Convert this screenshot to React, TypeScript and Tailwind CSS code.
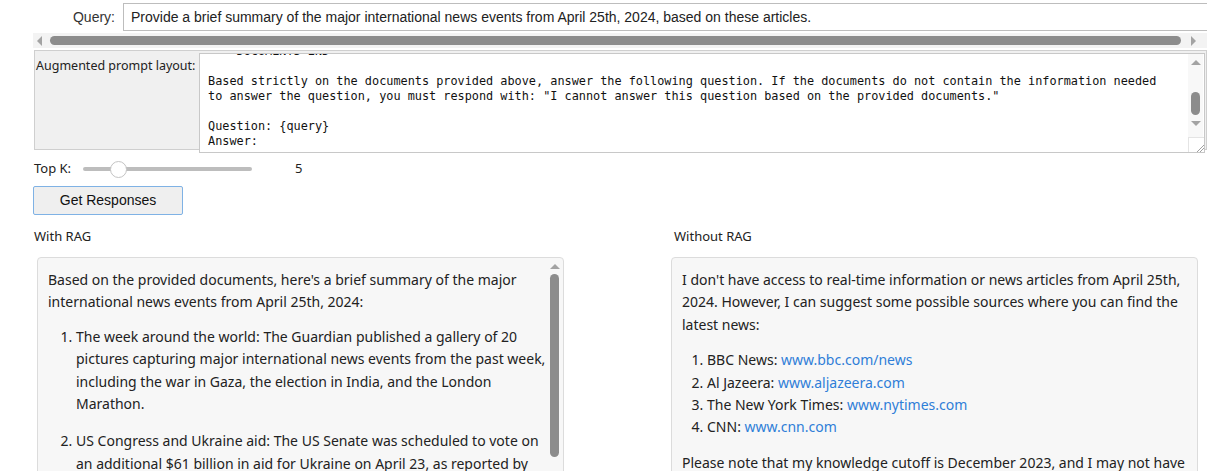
import React from 'react';

const ui = "font-['Noto_Sans',sans-serif]";
const arial = "font-['Liberation_Sans',Arial,sans-serif]";
const mono = "font-['DejaVu_Sans_Mono',monospace]";

function Arrow({ dir, className }: { dir: 'up' | 'down' | 'left' | 'right'; className?: string }) {
  const pts = {
    up: '0,6 5,1 10,6',
    down: '0,1 5,6 10,1',
    left: '6,0 1,5 6,10',
    right: '1,0 6,5 1,10',
  }[dir];
  const vb = dir === 'up' || dir === 'down' ? '0 0 10 7' : '0 0 7 10';
  const size = dir === 'up' || dir === 'down' ? 'w-[10px] h-[7px]' : 'w-[7px] h-[10px]';
  return (
    <svg viewBox={vb} className={`${size} ${className ?? ''}`}>
      <polygon points={pts} fill="#a3a3a3" />
    </svg>
  );
}

const prompt = `--- DOCUMENTS END ---

Based strictly on the documents provided above, answer the following question. If the documents do not contain the information needed
to answer the question, you must respond with: "I cannot answer this question based on the provided documents."

Question: {query}
Answer:`;

function Link({ children }: { children: React.ReactNode }) {
  return <span className="text-[#2f7ed8]">{children}</span>;
}

export default function App() {
  return (
    <div className={`h-[471px] w-[1207px] overflow-hidden bg-white text-[#222] ${ui}`}>
      {/* Query row */}
      <div className="flex items-center pt-[3px] pl-[33px]">
        <div className={`w-[82px] shrink-0 text-right text-[14px] text-[#333] ${arial}`}>Query:</div>
        <div
          className={`ml-[8px] h-[28px] w-[1120px] shrink-0 border border-[#bdbdbd] bg-white pl-[7px] text-[14px] leading-[26px] text-[#222] ${arial}`}
        >
          Provide a brief summary of the major international news events from April 25th, 2024, based on these articles.
        </div>
      </div>

      {/* horizontal scrollbar of the output area */}
      <div className="ml-[33px] mt-[2px] flex h-[15px] items-center bg-[#f3f3f3]">
        <Arrow dir="left" className="ml-[3px]" />
        <div className="ml-[7px] h-[9px] w-[1131px] rounded-full bg-[#8c8c8c]" />
        <Arrow dir="right" className="ml-[9px]" />
      </div>

      {/* Augmented prompt layout */}
      <div className="ml-[34px] mt-[2px] flex h-[100px] items-start border border-[#cfcfcf] bg-[#f0f0f0]">
        <div className="w-[164px] shrink-0 whitespace-nowrap pl-px pt-[4px] text-[12.5px] leading-[22px] text-[#222]">
          Augmented prompt layout:
        </div>
        <div className="relative mt-[2px] h-[100px] w-[1006px] shrink-0 overflow-hidden border border-[#c8c8c8] bg-white">
          <pre className={`-mt-[10.5px] pl-[8px] text-[11.85px] leading-[15px] text-[#111] ${mono}`}>{prompt}</pre>
          <div className="absolute right-[1px] top-0 flex h-[83px] w-[15px] flex-col items-center bg-[#f8f8f8]">
            <Arrow dir="up" className="mt-[5px]" />
            <div className="mt-[26px] h-[23px] w-[9px] rounded-full bg-[#8c8c8c]" />
            <Arrow dir="down" className="mt-[5px]" />
          </div>
          <div className="absolute bottom-0 right-0 flex h-[15px] w-[16px] items-end justify-end border-l border-t border-[#e4e4e4] bg-white">
            <svg viewBox="0 0 10 10" className="h-[10px] w-[10px]">
              <line x1="3" y1="10" x2="10" y2="3" stroke="#a0a0a0" strokeWidth="1" />
              <line x1="6" y1="10" x2="10" y2="6" stroke="#a0a0a0" strokeWidth="1" />
            </svg>
          </div>
        </div>
      </div>

      {/* Top K slider */}
      <div className="ml-[34px] mt-[7px] flex h-[24px] items-center text-[13px]">
        <div className="w-[49px]">Top K:</div>
        <div className="relative flex h-[24px] w-[169px] items-center">
          <div className="h-[4px] w-full rounded-full bg-[#bdbdbd]" />
          <div className="absolute left-[27px] top-[4px] h-[17px] w-[17px] rounded-full border border-[#c4c4c4] bg-white" />
        </div>
        <div className="ml-[43px] text-[13px]">5</div>
      </div>

      {/* Button */}
      <button
        className={`ml-[33px] mt-[5px] h-[29px] w-[150px] rounded-[2px] border border-[#7fb2e5] bg-[#efefef] text-[14px] text-[#111] ${arial}`}
      >
        Get Responses
      </button>

      {/* Results */}
      <div className="mt-[11px] flex text-[14px] leading-[22.4px]">
        {/* With RAG */}
        <div className="w-[670px] shrink-0 pl-[34px]">
          <div className="h-[20px] text-[13px] leading-[20px]">With RAG</div>
          <div className="relative ml-[3px] mt-[11px] h-[260px] w-[527px] overflow-hidden rounded-[4px] border border-[#dcdcdc] bg-[#f7f7f7] px-[10px] pt-[11px]">
            <p>
              Based on the provided documents, here's a brief summary of the major
              <br />
              international news events from April 25th, 2024:
            </p>
            <ol className="mt-[12px] list-decimal pl-[28px]">
              <li>
                The week around the world: The Guardian published a gallery of 20
                <br />
                pictures capturing major international news events from the past week,
                <br />
                including the war in Gaza, the election in India, and the London
                <br />
                Marathon.
              </li>
              <li className="mt-[15px]">
                US Congress and Ukraine aid: The US Senate was scheduled to vote on
                <br />
                an additional $61 billion in aid for Ukraine on April 23, as reported by
                <br />
                The Guardian.
              </li>
            </ol>
            <div className="absolute right-[3px] top-0 flex h-full w-[11px] flex-col items-center">
              <Arrow dir="up" className="mt-[5px] h-[6px] w-[9px]" />
              <div className="mt-[4px] h-[183px] w-[9px] rounded-full bg-[#8c8c8c]" />
            </div>
          </div>
        </div>

        {/* Without RAG */}
        <div className="w-[537px] shrink-0">
          <div className="h-[20px] pl-[4px] text-[13px] leading-[20px]">Without RAG</div>
          <div className="ml-px mt-[11px] h-[260px] w-[527px] overflow-hidden rounded-[4px] border border-[#dcdcdc] bg-[#f7f7f7] px-[10px] pt-[11px]">
            <p>
              I don't have access to real-time information or news articles from April 25th,
              <br />
              2024. However, I can suggest some possible sources where you can find the
              <br />
              latest news:
            </p>
            <ol className="mt-[13px] list-decimal pl-[25px]">
              <li>
                BBC News: <Link>www.bbc.com/news</Link>
              </li>
              <li>
                Al Jazeera: <Link>www.aljazeera.com</Link>
              </li>
              <li>
                The New York Times: <Link>www.nytimes.com</Link>
              </li>
              <li>
                CNN: <Link>www.cnn.com</Link>
              </li>
            </ol>
            <p className="mt-[13px]">
              Please note that my knowledge cutoff is December 2023, and I may not have
              <br />
              access to the latest news events.
            </p>
          </div>
        </div>
      </div>
    </div>
  );
}
